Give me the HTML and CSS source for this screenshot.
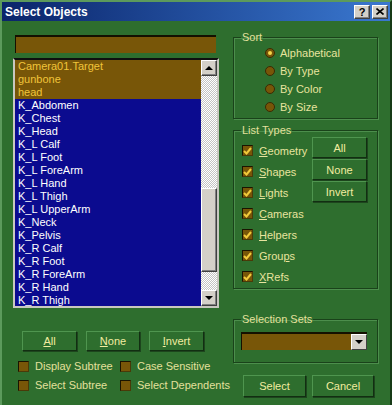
FILE: index.html
```html
<!DOCTYPE html>
<html lang="en">
<head>
    <meta charset="UTF-8">
    <title>Select Objects</title>
    <link rel="stylesheet" href="styles.css">
</head>
<body>
<div class="window">
    <div class="titlebar">
        <span class="title">Select Objects</span>
        <div class="caption-btns">
            <span class="cap-btn help">?</span>
            <span class="cap-btn">
                <svg width="8" height="7" viewBox="0 0 8 7"><path d="M0.5 0.5 L7.5 6.5 M7.5 0.5 L0.5 6.5" stroke="#000" stroke-width="1.6"/></svg>
            </span>
        </div>
    </div>

    <div class="dialog">
        <div class="left">
            <div class="filter"></div>

            <div class="listbox">
                <ul class="items">
                    <li class="sel">Camera01.Target</li>
                    <li class="sel">gunbone</li>
                    <li class="sel">head</li>
                    <li>K_Abdomen</li>
                    <li>K_Chest</li>
                    <li>K_Head</li>
                    <li>K_L Calf</li>
                    <li>K_L Foot</li>
                    <li>K_L ForeArm</li>
                    <li>K_L Hand</li>
                    <li>K_L Thigh</li>
                    <li>K_L UpperArm</li>
                    <li>K_Neck</li>
                    <li>K_Pelvis</li>
                    <li>K_R Calf</li>
                    <li>K_R Foot</li>
                    <li>K_R ForeArm</li>
                    <li>K_R Hand</li>
                    <li>K_R Thigh</li>
                </ul>
                <div class="scrollbar">
                    <div class="sb-btn"><span class="arrow-up"></span></div>
                    <div class="sb-track"><div class="sb-thumb"></div></div>
                    <div class="sb-btn"><span class="arrow-down"></span></div>
                </div>
            </div>

            <div class="list-btns">
                <button class="btn w55"><u>A</u>ll</button>
                <button class="btn w54"><u>N</u>one</button>
                <button class="btn w55"><u>I</u>nvert</button>
            </div>

            <div class="options">
                <label class="opt"><span class="box"></span>Display Subtree</label>
                <label class="opt"><span class="box"></span>Case Sensitive</label>
                <label class="opt"><span class="box"></span>Select Subtree</label>
                <label class="opt"><span class="box"></span>Select Dependents</label>
            </div>
        </div>

        <div class="right">
            <fieldset class="group sort">
                <legend>Sort</legend>
                <div class="radio"><span class="dot on"></span>Alphabetical</div>
                <div class="radio"><span class="dot"></span>By Type</div>
                <div class="radio"><span class="dot"></span>By Color</div>
                <div class="radio"><span class="dot"></span>By Size</div>
            </fieldset>

            <fieldset class="group types">
                <legend>List Types</legend>
                <div class="types-grid">
                    <div class="checks">
                        <label class="chk"><span class="box checked"><svg width="9" height="8" viewBox="0 0 9 8"><path d="M1 4 L3.5 6.5 L8 1" fill="none" stroke="#f2c93a" stroke-width="2"/></svg></span><span><u>G</u>eometry</span></label>
                        <label class="chk"><span class="box checked"><svg width="9" height="8" viewBox="0 0 9 8"><path d="M1 4 L3.5 6.5 L8 1" fill="none" stroke="#f2c93a" stroke-width="2"/></svg></span><span><u>S</u>hapes</span></label>
                        <label class="chk"><span class="box checked"><svg width="9" height="8" viewBox="0 0 9 8"><path d="M1 4 L3.5 6.5 L8 1" fill="none" stroke="#f2c93a" stroke-width="2"/></svg></span><span><u>L</u>ights</span></label>
                        <label class="chk"><span class="box checked"><svg width="9" height="8" viewBox="0 0 9 8"><path d="M1 4 L3.5 6.5 L8 1" fill="none" stroke="#f2c93a" stroke-width="2"/></svg></span><span><u>C</u>ameras</span></label>
                        <label class="chk"><span class="box checked"><svg width="9" height="8" viewBox="0 0 9 8"><path d="M1 4 L3.5 6.5 L8 1" fill="none" stroke="#f2c93a" stroke-width="2"/></svg></span><span><u>H</u>elpers</span></label>
                        <label class="chk"><span class="box checked"><svg width="9" height="8" viewBox="0 0 9 8"><path d="M1 4 L3.5 6.5 L8 1" fill="none" stroke="#f2c93a" stroke-width="2"/></svg></span><span>Grou<u>p</u>s</span></label>
                        <label class="chk"><span class="box checked"><svg width="9" height="8" viewBox="0 0 9 8"><path d="M1 4 L3.5 6.5 L8 1" fill="none" stroke="#f2c93a" stroke-width="2"/></svg></span><span><u>X</u>Refs</span></label>
                    </div>
                    <div class="type-btns">
                        <button class="btn type-btn">All</button>
                        <button class="btn type-btn">None</button>
                        <button class="btn type-btn">Invert</button>
                    </div>
                </div>
            </fieldset>

            <fieldset class="group sets">
                <legend>Selection Sets</legend>
                <div class="combo">
                    <div class="combo-btn"><span class="arrow-down"></span></div>
                </div>
            </fieldset>

            <div class="dialog-btns">
                <button class="btn select-btn">Select</button>
                <button class="btn cancel-btn">Cancel</button>
            </div>
        </div>
    </div>
</div>
</body>
</html>
```

FILE: styles.css
```css
body {
    margin: 0;
    font-family: "Liberation Sans", Arial, sans-serif;
    font-size: 11px;
}

.window {
    width: 392px;
    height: 405px;
    box-sizing: border-box;
    background-color: #2e6e2e;
    border-top: 2px solid #5c9a5c;
    border-left: 2px solid #5c9a5c;
    border-right: 2px solid #173a17;
    overflow: hidden;
}

/* title bar */
.titlebar {
    height: 19px;
    display: flex;
    align-items: center;
    justify-content: space-between;
    padding: 0 2px 0 3px;
    background: linear-gradient(to right, #0a246a, #3a78d0);
}
.title {
    color: white;
    font-weight: bold;
    font-size: 12px;
}
.caption-btns {
    display: flex;
    gap: 2px;
}
.cap-btn {
    width: 16px;
    height: 14px;
    box-sizing: border-box;
    background-color: #d4d0c8;
    border: 1px solid;
    border-color: #fff #404040 #404040 #fff;
    box-shadow: inset -1px -1px 0 #808080;
    display: flex;
    align-items: center;
    justify-content: center;
    font-weight: bold;
    font-size: 11px;
    color: #000;
}

/* body */
.dialog {
    display: flex;
}
.left {
    width: 206px;
    margin-left: 11px;
}
.right {
    width: 145px;
    margin-left: 14px;
}

.filter {
    width: 201px;
    height: 18px;
    margin: 14px 0 0 2px;
    box-sizing: border-box;
    background-color: #785608;
    border-top: 2px solid #141000;
    border-left: 1px solid #141000;
}

.listbox {
    margin-top: 5px;
    height: 250px;
    box-sizing: border-box;
    border: 2px solid #c8c8c0;
    border-top-color: #101010;
    background-color: #0b0b8f;
    display: flex;
    overflow: hidden;
}
.items {
    list-style: none;
    margin: 0;
    padding: 0;
    flex: 1;
}
.items li {
    height: 13px;
    line-height: 13px;
    padding-left: 3px;
    color: #ffffff;
    white-space: nowrap;
}
.items li.sel {
    background-color: #785608;
    color: #f0c43a;
}

.scrollbar {
    width: 16px;
    display: flex;
    flex-direction: column;
}
.sb-btn {
    height: 16px;
    box-sizing: border-box;
    background-color: #d4d0c8;
    border: 1px solid;
    border-color: #fff #404040 #404040 #fff;
    box-shadow: inset -1px -1px 0 #808080;
    display: flex;
    align-items: center;
    justify-content: center;
}
.sb-track {
    flex: 1;
    background: repeating-conic-gradient(#ffffff 0 25%, #c4c4c4 0 50%) 0 0 / 2px 2px;
    padding-top: 112px;
}
.sb-thumb {
    height: 84px;
    box-sizing: border-box;
    background-color: #d4d0c8;
    border: 1px solid;
    border-color: #fff #404040 #404040 #fff;
    box-shadow: inset -1px -1px 0 #808080;
}
.arrow-up {
    width: 0;
    height: 0;
    border-left: 4px solid transparent;
    border-right: 4px solid transparent;
    border-bottom: 4px solid #000;
}
.arrow-down {
    width: 0;
    height: 0;
    border-left: 4px solid transparent;
    border-right: 4px solid transparent;
    border-top: 4px solid #000;
}

/* buttons */
.btn {
    box-sizing: border-box;
    padding: 0;
    font-family: "Liberation Sans", Arial, sans-serif;
    font-size: 11px;
    color: #f2eca0;
    background-color: #2e6e2e;
    border: 1px solid;
    border-color: #4f954f #122e12 #122e12 #4f954f;
    box-shadow: 1px 1px 0 #1d451d;
}
.list-btns {
    margin-top: 23px;
    padding-left: 9px;
    display: flex;
    gap: 9px;
}
.list-btns .btn {
    height: 20px;
}
.w55 {
    width: 55px;
}
.w54 {
    width: 54px;
}

.options {
    margin-top: 9px;
    padding-left: 5px;
    display: grid;
    grid-template-columns: 102px auto;
    row-gap: 7px;
}
.opt {
    display: flex;
    align-items: center;
    gap: 6px;
    height: 12px;
    color: #e4e09c;
    white-space: nowrap;
}

.box {
    width: 11px;
    height: 11px;
    box-sizing: border-box;
    background-color: #785608;
    border-top: 1px solid #1a1400;
    border-left: 1px solid #1a1400;
    border-right: 1px solid #4a3a08;
    border-bottom: 1px solid #4a3a08;
    display: flex;
    align-items: center;
    justify-content: center;
    flex-shrink: 0;
}

/* group boxes */
.group {
    margin: 0;
    padding: 0;
    min-width: 0;
    border: 1px solid #1a421a;
    box-shadow: inset 1px 1px 0 #4c8e4c, 1px 1px 0 #4c8e4c;
}
.group legend {
    margin-left: 7px;
    padding: 0 1px;
    line-height: 13px;
    color: #e4e09c;
}

.sort {
    margin-top: 10px;
    padding-bottom: 2px;
}
.radio {
    height: 18px;
    display: flex;
    align-items: center;
    gap: 5px;
    padding-left: 31px;
    color: #e8e49e;
}
.dot {
    width: 10px;
    height: 10px;
    box-sizing: border-box;
    border-radius: 50%;
    background-color: #785608;
    border: 1px solid #3a2a04;
    display: flex;
    align-items: center;
    justify-content: center;
}
.dot.on::after {
    content: "";
    width: 4px;
    height: 4px;
    border-radius: 50%;
    background-color: #f6d64a;
}

.types {
    margin-top: 5px;
    padding: 3px 0 1px 0;
}
.types-grid {
    display: grid;
    grid-template-columns: 70px 55px;
    padding-left: 8px;
}
.chk {
    height: 21px;
    display: flex;
    align-items: center;
    gap: 6px;
    color: #e8e49e;
}
.type-btns {
    margin-top: -3px;
    display: flex;
    flex-direction: column;
    gap: 1px;
}
.type-btn {
    width: 55px;
    height: 21px;
}

.sets {
    margin-top: 24px;
    padding: 6px 0 12px 0;
}
.combo {
    width: 126px;
    height: 18px;
    margin-left: 7px;
    box-sizing: border-box;
    background-color: #785608;
    border-top: 2px solid #141000;
    border-left: 1px solid #141000;
    display: flex;
    justify-content: flex-end;
}
.combo-btn {
    width: 16px;
    height: 16px;
    box-sizing: border-box;
    background-color: #d4d0c8;
    border: 1px solid;
    border-color: #fff #404040 #404040 #fff;
    display: flex;
    align-items: center;
    justify-content: center;
}

.dialog-btns {
    margin-top: 12px;
    padding-left: 10px;
    display: flex;
    gap: 6px;
}
.select-btn {
    width: 63px;
    height: 22px;
}
.cancel-btn {
    width: 62px;
    height: 22px;
}
```
